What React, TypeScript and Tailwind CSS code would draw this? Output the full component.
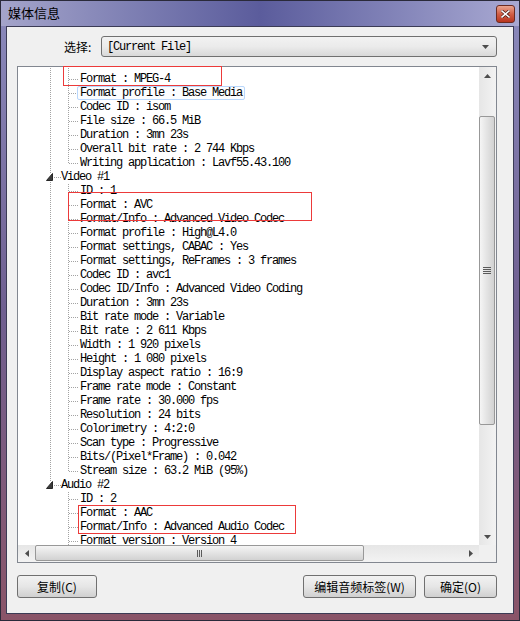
import React from "react";

type Row =
  | { kind: "root"; text: string; prev: boolean; next: boolean }
  | { kind: "leaf"; text: string; rootCont: boolean; last: boolean; hot?: boolean };

const general = [
  "",
  "Format : MPEG-4",
  "Format profile : Base Media",
  "Codec ID : isom",
  "File size : 66.5 MiB",
  "Duration : 3mn 23s",
  "Overall bit rate : 2 744 Kbps",
  "Writing application : Lavf55.43.100",
];

const video = [
  "ID : 1",
  "Format : AVC",
  "Format/Info : Advanced Video Codec",
  "Format profile : High@L4.0",
  "Format settings, CABAC : Yes",
  "Format settings, ReFrames : 3 frames",
  "Codec ID : avc1",
  "Codec ID/Info : Advanced Video Coding",
  "Duration : 3mn 23s",
  "Bit rate mode : Variable",
  "Bit rate : 2 611 Kbps",
  "Width : 1 920 pixels",
  "Height : 1 080 pixels",
  "Display aspect ratio : 16:9",
  "Frame rate mode : Constant",
  "Frame rate : 30.000 fps",
  "Resolution : 24 bits",
  "Colorimetry : 4:2:0",
  "Scan type : Progressive",
  "Bits/(Pixel*Frame) : 0.042",
  "Stream size : 63.2 MiB (95%)",
];

const audio = ["ID : 2", "Format : AAC", "Format/Info : Advanced Audio Codec", "Format version : Version 4"];

const rows: Row[] = [
  ...general.map((t, i) => ({
    kind: "leaf" as const,
    text: t,
    rootCont: true,
    last: i === general.length - 1,
    hot: i === 2,
  })),
  { kind: "root", text: "Video #1", prev: true, next: true },
  ...video.map((t, i) => ({ kind: "leaf" as const, text: t, rootCont: true, last: i === video.length - 1 })),
  { kind: "root", text: "Audio #2", prev: true, next: false },
  ...audio.map((t) => ({ kind: "leaf" as const, text: t, rootCont: false, last: false })),
];

const DOT = "#a3a3a3";

const Dotted = (p: { x1: number; y1: number; x2: number; y2: number }) => (
  <line {...p} stroke={DOT} strokeWidth={1} strokeDasharray="1 1" shapeRendering="crispEdges" />
);

const LeafGutter = ({ rootCont, last }: { rootCont: boolean; last: boolean }) => (
  <svg width="62" height="14" className="shrink-0">
    {rootCont && <Dotted x1={32.5} y1={0} x2={32.5} y2={14} />}
    <Dotted x1={50.5} y1={0} x2={50.5} y2={last ? 8 : 14} />
    <Dotted x1={51} y1={7.5} x2={61} y2={7.5} />
  </svg>
);

const RootGutter = ({ prev, next }: { prev: boolean; next: boolean }) => (
  <svg width="43" height="14" className="shrink-0">
    {prev && <Dotted x1={32.5} y1={0} x2={32.5} y2={4} />}
    {next && <Dotted x1={32.5} y1={10} x2={32.5} y2={14} />}
    <polygon points="34.5,3.5 34.5,10.5 28.5,10.5" fill="#3c3c3c" stroke="#262626" strokeWidth={1} />
    <Dotted x1={36} y1={7.5} x2={43} y2={7.5} />
  </svg>
);

const mono = "font-['Liberation_Mono',monospace] text-[12px] tracking-[-1.2px] text-black";
const cjk = "font-['Noto_Sans_CJK_SC','Noto_Sans',sans-serif]";

const TreeRow = ({ row, first }: { row: Row; first: boolean }) => (
  <div className={`flex h-[14px] shrink-0 items-center leading-[14px] ${first ? "mt-[-9px]" : ""}`}>
    {row.kind === "root" ? (
      <>
        <RootGutter prev={row.prev} next={row.next} />
        <span className={`${mono} whitespace-pre`}>{row.text}</span>
      </>
    ) : (
      <>
        <LeafGutter rootCont={row.rootCont} last={row.last} />
        {row.hot ? (
          <span className={`${mono} whitespace-pre ml-[-3px] px-[2px] h-[14px] border border-[#b9d7fc] rounded-[2px] bg-[#fbfdff] leading-[12px]`}>
            {row.text}
          </span>
        ) : (
          <span className={`${mono} whitespace-pre`}>{row.text}</span>
        )}
      </>
    )}
  </div>
);

const Arrow = ({ dir }: { dir: "up" | "down" | "left" | "right" }) => {
  const pts = {
    up: "3.5,0 7,4 0,4",
    down: "0,0 7,0 3.5,4",
    left: "0,3.5 4,0 4,7",
    right: "0,0 4,3.5 0,7",
  }[dir];
  const w = dir === "up" || dir === "down" ? 7 : 4;
  const h = dir === "up" || dir === "down" ? 4 : 7;
  return (
    <svg width={w} height={h}>
      <polygon points={pts} fill="#4d4d4d" />
    </svg>
  );
};

const VScroll = () => (
  <div className="flex w-[17px] flex-col bg-gradient-to-r from-[#e6e6e6] to-[#f3f3f3]">
    <div className="flex h-[17px] items-center justify-center">
      <Arrow dir="up" />
    </div>
    <div className="h-[32px]" />
    <div className="flex h-[309px] w-[16px] items-center justify-center rounded-[2px] border border-[#989898] bg-gradient-to-r from-[#f5f5f5] via-[#e3e3e3] to-[#d2d2d2]">
      <div className="flex flex-col gap-[1px]">
        <div className="h-[1px] w-[8px] bg-[#5a5a5a]" />
        <div className="h-[1px] w-[8px] bg-[#5a5a5a]" />
        <div className="h-[1px] w-[8px] bg-[#5a5a5a]" />
        <div className="h-[1px] w-[8px] bg-[#5a5a5a]" />
      </div>
    </div>
    <div className="flex-1" />
    <div className="flex h-[17px] items-center justify-center">
      <Arrow dir="down" />
    </div>
  </div>
);

const HScroll = () => (
  <div className="flex h-[17px] flex-1 bg-gradient-to-b from-[#e6e6e6] to-[#f3f3f3]">
    <div className="flex w-[17px] items-center justify-center">
      <Arrow dir="left" />
    </div>
    <div className="flex h-[16px] w-[329px] items-center justify-center rounded-[2px] border border-[#989898] bg-gradient-to-b from-[#f5f5f5] via-[#e3e3e3] to-[#d2d2d2]">
      <div className="flex gap-[1px]">
        <div className="h-[7px] w-[1px] bg-[#5a5a5a]" />
        <div className="h-[7px] w-[1px] bg-[#5a5a5a]" />
        <div className="h-[7px] w-[1px] bg-[#5a5a5a]" />
      </div>
    </div>
    <div className="flex-1" />
    <div className="flex w-[17px] items-center justify-center">
      <Arrow dir="right" />
    </div>
  </div>
);

const Button = ({ label, w }: { label: string; w: string }) => (
  <button
    className={`${w} ${cjk} flex h-[23px] items-center justify-center rounded-[3px] border border-[#707070] bg-gradient-to-b from-[#f2f2f2] via-[#e6e6e6] to-[#d0d0d0] text-[12px] text-black`}
  >
    {label}
  </button>
);

export default function App() {
  return (
    <div className="flex h-[621px] w-[520px] flex-col overflow-hidden border border-[#2a2a3a] bg-gradient-to-b from-[#8b8bbd] via-[#6f5f90] to-[#8a5468]">
      {/* title bar */}
      <div className="flex h-[25px] shrink-0 items-start bg-gradient-to-r from-[#a4a4ca] via-[#5b5c9c] to-[#a9a9d2]">
        <span className={`${cjk} ml-[7px] mt-[3px] text-[13px] leading-[18px] text-black`}>媒体信息</span>
        <div className="flex-1" />
        <div className="mr-[4px] mt-[4px] flex h-[18px] w-[19px] items-center justify-center rounded-[3px] border border-[#6b2b22] bg-gradient-to-b from-[#e9a48f] via-[#d15e45] to-[#b8341e]">
          <svg width="9" height="8" viewBox="0 0 9 8">
            <path d="M1 1 L8 7 M8 1 L1 7" stroke="#4a1a12" strokeWidth="3" strokeLinecap="square" />
            <path d="M1 1 L8 7 M8 1 L1 7" stroke="#ffffff" strokeWidth="1.6" strokeLinecap="square" />
          </svg>
        </div>
      </div>

      {/* client */}
      <div className="mx-[5px] mb-[6px] flex flex-1 flex-col border border-[#3b3b55] bg-[#f0f0f0] pl-[10px] pr-[16px]">
        <div className="mt-[9px] flex h-[21px] items-center">
          <span className={`${cjk} ml-[47px] text-[12px] text-black`}>选择:</span>
          <div className="flex-1" />
          <div className="flex h-[21px] w-[396px] items-center rounded-[3px] border border-[#707070] bg-gradient-to-b from-[#f2f2f2] via-[#ebebeb] to-[#d9d9d9] pl-[5px] pr-[7px]">
            <span className={`${mono} whitespace-pre`}>[Current File]</span>
            <div className="flex-1" />
            <Arrow dir="down" />
          </div>
        </div>

        <div className="relative mt-[9px] flex h-[497px] w-[480px] flex-col border border-[#828790] bg-white">
          <div className="flex min-h-0 flex-1">
            <div className="flex min-w-0 flex-1 flex-col overflow-hidden">
              {rows.map((r, i) => (
                <TreeRow key={i} row={r} first={i === 0} />
              ))}
            </div>
            <VScroll />
          </div>
          <div className="flex">
            <HScroll />
            <div className="w-[17px] bg-[#f0f0f0]" />
          </div>

          {/* annotations */}
          <div className="absolute left-[45px] top-[-1px] h-[20px] w-[159px] border border-[#ec3a3a]" />
          <div className="absolute left-[50px] top-[125px] h-[29px] w-[244px] border border-[#ec3a3a]" />
          <div className="absolute left-[60px] top-[438px] h-[29px] w-[218px] border border-[#ec3a3a]" />
        </div>

        <div className="mt-[12px] flex">
          <Button label="复制(C)" w="w-[80px]" />
          <div className="flex-1" />
          <Button label="编辑音频标签(W)" w="w-[113px]" />
          <div className="w-[8px]" />
          <Button label="确定(O)" w="w-[73px]" />
        </div>
      </div>
    </div>
  );
}
